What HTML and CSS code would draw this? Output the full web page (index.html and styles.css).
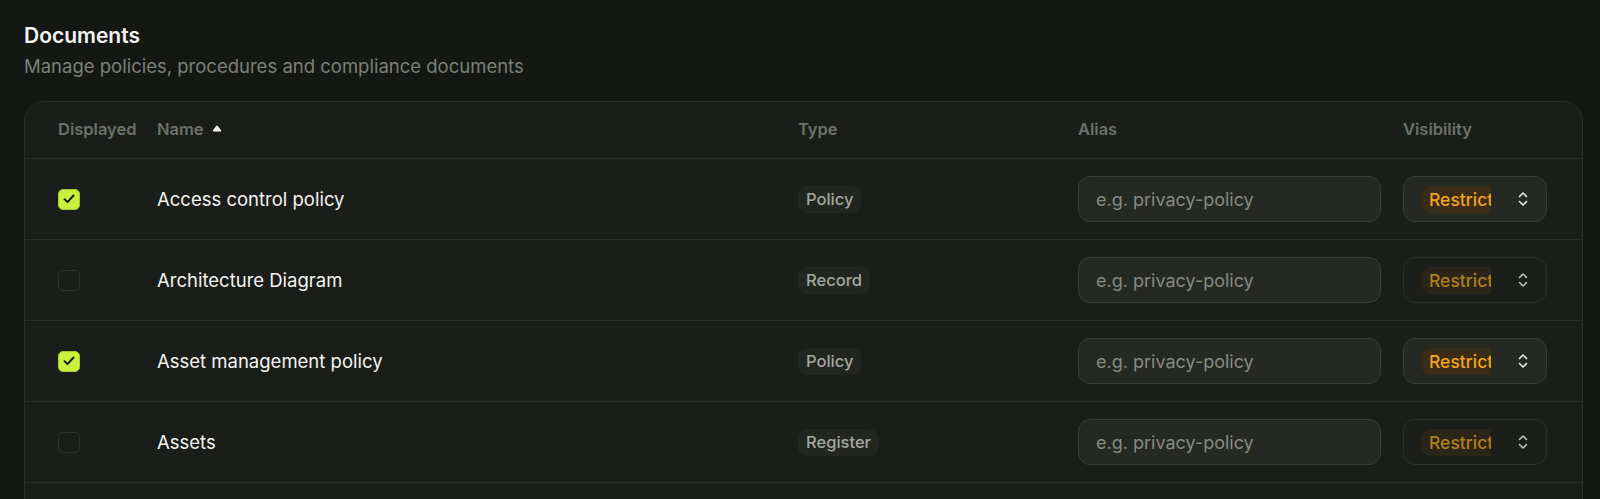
FILE: index.html
```html
<!DOCTYPE html>
<html lang="en">
<head>
<meta charset="utf-8">
<title>Documents</title>
<link rel="stylesheet" href="styles.css">
</head>
<body>
<main class="page">
  <header class="page-head">
    <h1 class="title">Documents</h1>
    <p class="subtitle">Manage policies, procedures and compliance documents</p>
  </header>

  <section class="card">
    <div class="row head">
      <div class="th">Displayed</div>
      <div class="th th-sort">Name
        <svg class="sort" width="10" height="7" viewBox="0 0 10 7"><path d="M4.1 1.1 Q5 0 5.9 1.1 L9.2 5.4 Q9.8 6.5 8.6 6.5 L1.4 6.5 Q0.2 6.5 0.8 5.4 Z" fill="#f2f3ef"/></svg>
      </div>
      <div class="th">Type</div>
      <div class="th">Alias</div>
      <div class="th">Visibility</div>
    </div>

    <div class="row">
      <div class="cell"><span class="check on"><svg width="12" height="10" viewBox="0 0 12 10"><path d="M1.5 5.2 L4.5 8.2 L10.5 1.5" fill="none" stroke="#141612" stroke-width="1.9" stroke-linecap="round" stroke-linejoin="round"/></svg></span></div>
      <div class="cell name">Access control policy</div>
      <div class="cell"><span class="badge">Policy</span></div>
      <div class="cell"><input class="alias" type="text" placeholder="e.g. privacy-policy"></div>
      <div class="cell"><div class="select"><span class="pill-wrap"><span class="pill">Restricted</span></span><svg class="chev" width="10" height="16" viewBox="0 0 10 16"><path d="M1.5 5.5 L5 2 L8.5 5.5 M1.5 10.5 L5 14 L8.5 10.5" fill="none" stroke="#e9ebe6" stroke-width="1.6" stroke-linecap="round" stroke-linejoin="round"/></svg></div></div>
    </div>

    <div class="row">
      <div class="cell"><span class="check"></span></div>
      <div class="cell name">Architecture Diagram</div>
      <div class="cell"><span class="badge">Record</span></div>
      <div class="cell"><input class="alias" type="text" placeholder="e.g. privacy-policy"></div>
      <div class="cell"><div class="select off"><span class="pill-wrap"><span class="pill">Restricted</span></span><svg class="chev" width="10" height="16" viewBox="0 0 10 16"><path d="M1.5 5.5 L5 2 L8.5 5.5 M1.5 10.5 L5 14 L8.5 10.5" fill="none" stroke="#e9ebe6" stroke-width="1.6" stroke-linecap="round" stroke-linejoin="round"/></svg></div></div>
    </div>

    <div class="row">
      <div class="cell"><span class="check on"><svg width="12" height="10" viewBox="0 0 12 10"><path d="M1.5 5.2 L4.5 8.2 L10.5 1.5" fill="none" stroke="#141612" stroke-width="1.9" stroke-linecap="round" stroke-linejoin="round"/></svg></span></div>
      <div class="cell name">Asset management policy</div>
      <div class="cell"><span class="badge">Policy</span></div>
      <div class="cell"><input class="alias" type="text" placeholder="e.g. privacy-policy"></div>
      <div class="cell"><div class="select"><span class="pill-wrap"><span class="pill">Restricted</span></span><svg class="chev" width="10" height="16" viewBox="0 0 10 16"><path d="M1.5 5.5 L5 2 L8.5 5.5 M1.5 10.5 L5 14 L8.5 10.5" fill="none" stroke="#e9ebe6" stroke-width="1.6" stroke-linecap="round" stroke-linejoin="round"/></svg></div></div>
    </div>

    <div class="row">
      <div class="cell"><span class="check"></span></div>
      <div class="cell name">Assets</div>
      <div class="cell"><span class="badge">Register</span></div>
      <div class="cell"><input class="alias" type="text" placeholder="e.g. privacy-policy"></div>
      <div class="cell"><div class="select off"><span class="pill-wrap"><span class="pill">Restricted</span></span><svg class="chev" width="10" height="16" viewBox="0 0 10 16"><path d="M1.5 5.5 L5 2 L8.5 5.5 M1.5 10.5 L5 14 L8.5 10.5" fill="none" stroke="#e9ebe6" stroke-width="1.6" stroke-linecap="round" stroke-linejoin="round"/></svg></div></div>
    </div>

    <div class="row">
      <div class="cell"><span class="check"></span></div>
      <div class="cell name">Business continuity plan</div>
      <div class="cell"><span class="badge">Plan</span></div>
      <div class="cell"><input class="alias" type="text" placeholder="e.g. privacy-policy"></div>
      <div class="cell"><div class="select off"><span class="pill-wrap"><span class="pill">Restricted</span></span></div></div>
    </div>
  </section>
</main>
</body>
</html>
```

FILE: styles.css
```css
* { box-sizing: border-box; }

html, body {
  margin: 0;
  padding: 0;
  height: 100%;
  overflow: hidden;
  background: #151714;
}

body {
  font-family: Inter, "Liberation Sans", sans-serif;
  color: #f1f2ee;
}

.page {
  padding: 23px 0 0 24px;
}

.title {
  margin: 0;
  font-size: 21px;
  font-weight: 600;
  line-height: 26px;
  color: #f3f4f0;
}

.subtitle {
  margin: 5px 0 0;
  font-size: 18.5px;
  line-height: 24px;
  color: #7b8079;
}

.card {
  margin-top: 23px;
  width: 1559px;
  background: #1b1d1a;
  border: 1px solid #2a2d28;
  border-radius: 20px;
  overflow: hidden;
}

.row {
  display: grid;
  grid-template-columns: 99px 641px 280px 325px 1fr;
  padding: 0 35px 0 33px;
  height: 81px;
  align-items: center;
  border-bottom: 1px solid #2a2d28;
}

.row.head {
  height: 57px;
}

.th {
  font-size: 16.5px;
  font-weight: 600;
  color: #6c716a;
  line-height: 20px;
  padding-bottom: 2px;
}

.th-sort {
  display: flex;
  align-items: center;
  gap: 8px;
}

.sort { margin-top: -2px; }

.cell {
  display: flex;
  align-items: center;
}

.check {
  width: 22px;
  height: 21px;
  border-radius: 5px;
  border: 1.5px solid #2e312c;
  display: flex;
  align-items: center;
  justify-content: center;
}

.check.on {
  background: #c8f03c;
  border-color: #a6c934;
}

.name {
  font-size: 18.5px;
  line-height: 24px;
  color: #f3f4f0;
}

.badge {
  display: inline-block;
  padding: 0 8px;
  height: 27px;
  line-height: 27px;
  border-radius: 9px;
  background: #222520;
  color: #a4a8a1;
  font-size: 16.5px;
  font-weight: 500;
}

.alias {
  width: 303px;
  height: 46px;
  border-radius: 12px;
  border: 1px solid #393d37;
  background: #252823;
  padding: 0 17px;
  font-family: Inter, "Liberation Sans", sans-serif;
  font-size: 18px;
  color: #f1f2ee;
  outline: none;
}

.alias::placeholder {
  color: #858a83;
}

.select {
  width: 144px;
  height: 46px;
  border-radius: 12px;
  border: 1px solid #393d37;
  background: #252823;
  display: flex;
  align-items: center;
  padding: 0 18px 0 17px;
}

.select.off {
  background: #1c1e1b;
  border-color: #2b2e29;
}

.pill-wrap {
  width: 70px;
  overflow: hidden;
  border-radius: 10px 0 0 10px;
  display: flex;
}

.pill {
  flex: none;
  height: 27px;
  line-height: 27px;
  padding: 0 8px;
  border-radius: 10px;
  background: #3a2c17;
  color: #f4a51c;
  font-size: 17.5px;
  font-weight: 500;
  white-space: nowrap;
}

.select.off .pill {
  background: #2b2418;
  color: #b0801d;
}

.chev {
  margin-left: auto;
}

.select.off .chev {
  opacity: 0.8;
}
```
